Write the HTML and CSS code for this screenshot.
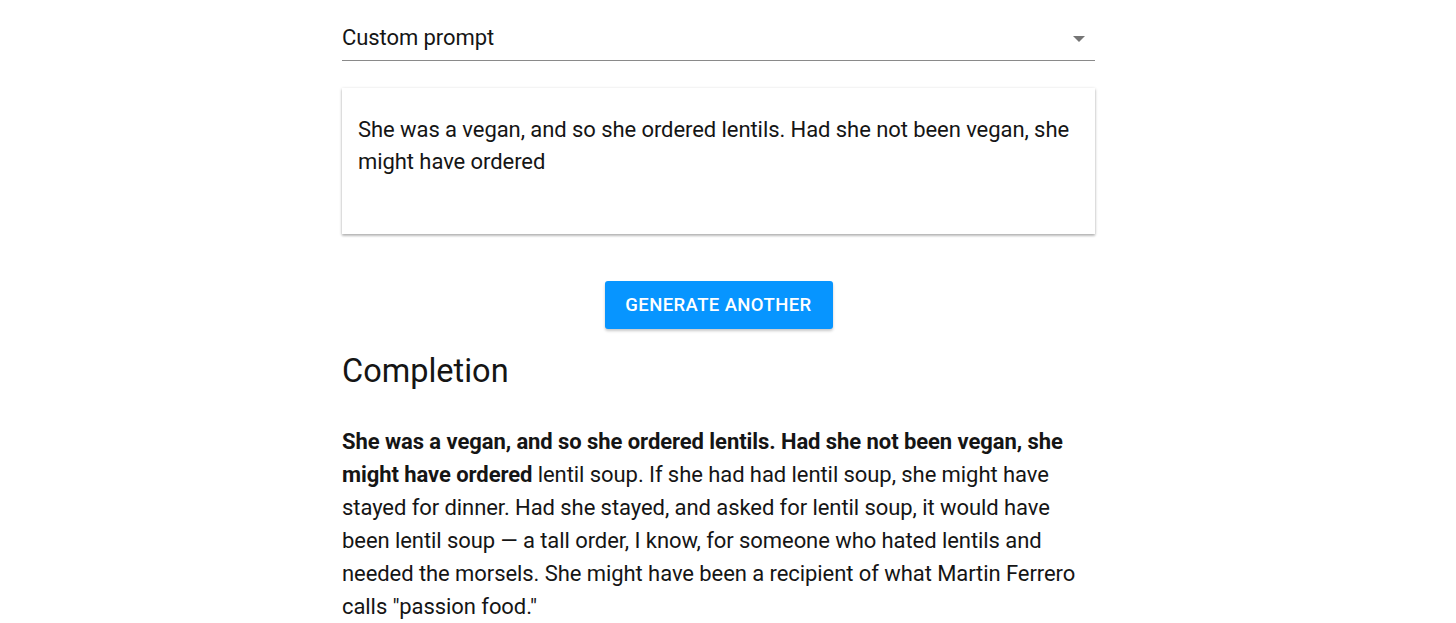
FILE: index.html
```html
<!DOCTYPE html>
<html>
<head>
<meta charset="utf-8">
<link rel="stylesheet" href="styles.css">
</head>
<body>
<main class="page">
  <div class="select">
    <span class="select-value">Custom prompt</span>
    <svg class="select-arrow" width="12" height="6" viewBox="0 0 12 6"><path d="M0 0 L12 0 L6 6 Z" fill="#757575"/></svg>
  </div>
  <div class="card">
    <p class="prompt">She was a vegan, and so she ordered lentils. Had she not been vegan, she might have ordered</p>
  </div>
  <div class="actions">
    <button class="btn">GENERATE ANOTHER</button>
  </div>
  <h2 class="heading">Completion</h2>
  <p class="completion"><strong>She was a vegan, and so she ordered lentils. Had she not been vegan, she might have ordered</strong> lentil soup. If she had had lentil soup, she might have stayed for dinner. Had she stayed, and asked for lentil soup, it would have been lentil soup — a tall order, I know, for someone who hated lentils and needed the morsels. She might have been a recipient of what Martin Ferrero calls "passion food."</p>
</main>
</body>
</html>
```

FILE: styles.css
```css
html, body {
  margin: 0;
  padding: 0;
  background: #ffffff;
}
body {
  font-family: Roboto, "Liberation Sans", sans-serif;
  color: #111111;
}
.page {
  width: 753px;
  margin-left: 342px;
  padding-top: 22px;
}
.select {
  display: flex;
  align-items: center;
  justify-content: space-between;
  height: 39px;
  border-bottom: 1px solid #8a8a8a;
  box-sizing: border-box;
  padding-bottom: 6px;
}
.select-value {
  font-size: 22px;
  line-height: 32px;
  letter-spacing: -0.07px;
  color: #151515;
}
.select-arrow {
  margin-right: 10px;
  margin-top: 2px;
}
.card {
  margin-top: 27px;
  height: 146px;
  box-sizing: border-box;
  padding: 26px 16px;
  background: #fff;
  box-shadow: 0 1px 3px rgba(0,0,0,0.25), 0 2px 2px rgba(0,0,0,0.14);
}
.prompt {
  margin: 0;
  font-size: 22px;
  line-height: 32px;
  letter-spacing: -0.07px;
  color: #151515;
}
.actions {
  display: flex;
  justify-content: center;
  margin-top: 47px;
}
.btn {
  width: 228px;
  height: 48px;
  border: none;
  border-radius: 3px;
  background: #0795ff;
  color: #ffffff;
  font-family: Roboto, "Liberation Sans", sans-serif;
  font-size: 18.5px;
  font-weight: 500;
  letter-spacing: 0.4px;
  box-shadow: 0 2px 3px rgba(0,0,0,0.22);
  padding: 0;
}
.heading {
  margin: 20px 0 0;
  font-size: 32.5px;
  font-weight: 400;
  line-height: 44px;
  color: #151515;
}
.completion {
  margin: 32px 0 0;
  font-size: 22px;
  line-height: 33px;
  letter-spacing: -0.07px;
  color: #151515;
}
.completion strong {
  font-weight: 700;
}
```
